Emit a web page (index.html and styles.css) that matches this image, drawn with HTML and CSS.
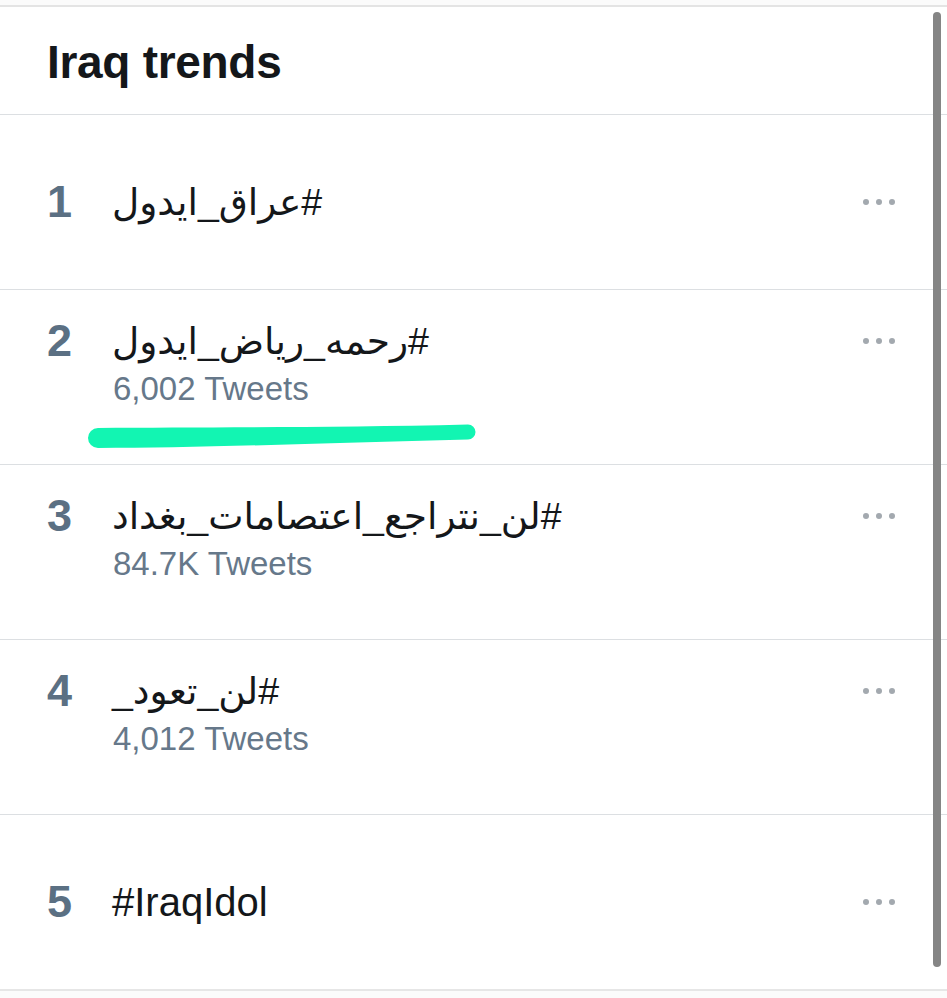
FILE: index.html
```html
<!DOCTYPE html>
<html lang="en">
<head>
<meta charset="utf-8">
<title>Iraq trends</title>
<link rel="stylesheet" href="styles.css">
</head>
<body>
<div class="frame">
  <div class="panel">
    <header class="panel-head">
      <h1 class="panel-title">Iraq trends</h1>
    </header>
    <ul class="trends">
      <li class="trend trend-single">
        <div class="trend-line">
          <span class="rank">1</span>
          <span class="tag tag-ar" dir="auto">#عراق_ايدول</span>
          <span class="more"><i></i><i></i><i></i></span>
        </div>
      </li>
      <li class="trend trend-double marked">
        <div class="trend-line">
          <span class="rank">2</span>
          <span class="tag tag-ar" dir="auto">#رحمه_رياض_ايدول</span>
          <span class="more"><i></i><i></i><i></i></span>
        </div>
        <div class="count">6,002 Tweets</div>
        <svg class="highlight" width="410" height="36" viewBox="0 0 410 36">
          <path d="M21 11 C 120 10, 250 11, 391 7.5 A 7.5 7.5 0 0 1 391 22.5 C 250 26, 120 31, 21 31 A 10 10 0 0 1 21 11 Z" fill="#12f5b2"/>
        </svg>
      </li>
      <li class="trend trend-double">
        <div class="trend-line">
          <span class="rank">3</span>
          <span class="tag tag-ar" dir="auto">#لن_نتراجع_اعتصامات_بغداد</span>
          <span class="more"><i></i><i></i><i></i></span>
        </div>
        <div class="count">84.7K Tweets</div>
      </li>
      <li class="trend trend-double">
        <div class="trend-line">
          <span class="rank">4</span>
          <span class="tag tag-ar" dir="auto">#لن_تعود_</span>
          <span class="more"><i></i><i></i><i></i></span>
        </div>
        <div class="count">4,012 Tweets</div>
      </li>
      <li class="trend trend-single">
        <div class="trend-line">
          <span class="rank">5</span>
          <span class="tag" dir="auto">#IraqIdol</span>
          <span class="more"><i></i><i></i><i></i></span>
        </div>
      </li>
    </ul>
  </div>
  <div class="scrollbar"></div>
</div>
</body>
</html>
```

FILE: styles.css
```css
* { box-sizing: border-box; }

html, body {
  margin: 0;
  padding: 0;
  background: #f7f7f7;
}

body {
  font-family: "Liberation Sans", "DejaVu Sans", Arial, sans-serif;
  color: #14171a;
}

.frame {
  position: relative;
  width: 947px;
  height: 998px;
  background: #fbfbfb;
  padding-top: 5px;
  overflow: hidden;
}

.panel {
  background: #ffffff;
  border-top: 2px solid #e4e4e4;
  border-bottom: 2px solid #e6e6e6;
}

.panel-head {
  height: 108px;
  display: flex;
  align-items: center;
  padding-left: 47px;
  border-bottom: 1px solid #dcdfe2;
}

.panel-title {
  margin: 0;
  font-size: 46px;
  font-weight: 700;
  letter-spacing: -0.3px;
  line-height: 1;
  color: #14171a;
  padding-top: 2px;
}

.trends {
  list-style: none;
  margin: 0;
  padding: 0;
}

.trend {
  position: relative;
  height: 175px;
  display: flex;
  flex-direction: column;
  justify-content: center;
  border-bottom: 1px solid #dcdfe2;
}

.trend:last-child {
  border-bottom: none;
  height: 174px;
}

.trend-double {
  padding-bottom: 28px;
}

.trend-line {
  display: flex;
  align-items: center;
  height: 48px;
  padding-left: 47px;
  padding-right: 52px;
}

.rank {
  width: 65px;
  flex: none;
  font-size: 45px;
  font-weight: 700;
  color: #5b7083;
  line-height: 48px;
}

.tag {
  flex: 1;
  text-align: left;
  font-size: 40px;
  line-height: 48px;
  color: #14171a;
  font-family: "Liberation Sans", "DejaVu Sans", sans-serif;
}

.tag-ar {
  font-size: 37.5px;
}

.more {
  flex: none;
  display: flex;
  gap: 7px;
}

.more i {
  display: block;
  width: 6px;
  height: 6px;
  border-radius: 50%;
  background: #a3a9af;
}

.count {
  padding-left: 113px;
  font-size: 33px;
  line-height: 40px;
  color: #66788a;
  margin-top: 4px;
}

.highlight {
  position: absolute;
  left: 77px;
  top: 127px;
}

.scrollbar {
  position: absolute;
  left: 933px;
  top: 12px;
  width: 8px;
  height: 955px;
  border-radius: 4px;
  background: #858585;
}
```
